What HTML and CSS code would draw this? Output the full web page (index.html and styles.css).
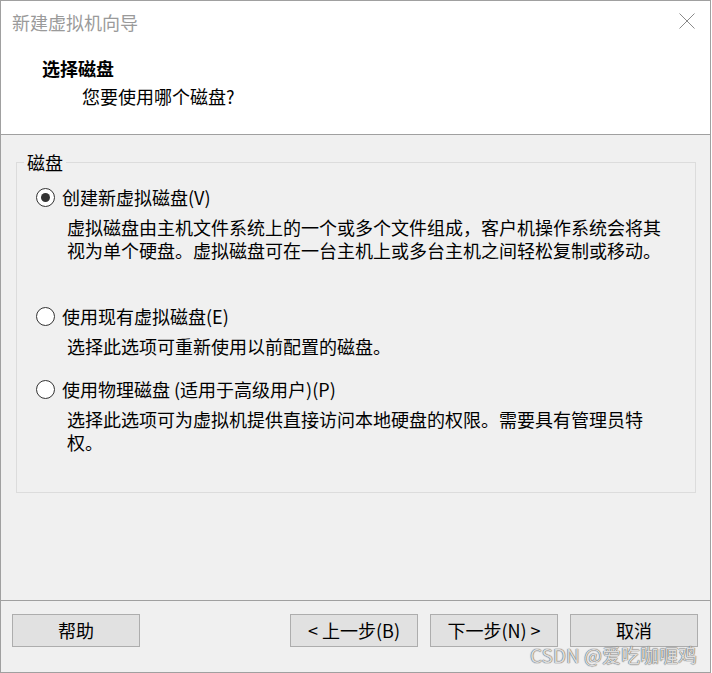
FILE: index.html
```html
<!DOCTYPE html>
<html lang="zh-CN">
  <head>
    <meta charset="UTF-8" />
    <meta name="viewport" content="width=device-width, initial-scale=1.0" />
    <title>新建虚拟机向导</title>
    <link rel="stylesheet" href="styles.css">
  </head>
  <body>
    <div class="window">
      <!-- Верхняя белая часть: заголовок окна и шага -->
      <div class="top">
        <div class="titlebar">
          <span class="title">新建虚拟机向导</span>
          <svg class="close" width="16" height="16" viewBox="0 0 16 16">
            <path d="M0.5 0.5 L15.5 15.5 M15.5 0.5 L0.5 15.5" stroke="#8a8a8a" stroke-width="1" fill="none" />
          </svg>
        </div>
        <div class="step">
          <div class="step-title">选择磁盘</div>
          <div class="step-sub">您要使用哪个磁盘?</div>
        </div>
      </div>

      <!-- Выбор диска -->
      <div class="content">
        <fieldset class="group">
          <legend>磁盘</legend>
          <div class="options">
            <div class="option">
              <label class="row"><span class="radio checked"></span>创建新虚拟磁盘(V)</label>
              <p class="desc tall">虚拟磁盘由主机文件系统上的一个或多个文件组成，客户机操作系统会将其视为单个硬盘。虚拟磁盘可在一台主机上或多台主机之间轻松复制或移动。</p>
            </div>
            <div class="option">
              <label class="row"><span class="radio"></span>使用现有虚拟磁盘(E)</label>
              <p class="desc">选择此选项可重新使用以前配置的磁盘。</p>
            </div>
            <div class="option">
              <label class="row"><span class="radio"></span>使用物理磁盘 (适用于高级用户)(P)</label>
              <p class="desc">选择此选项可为虚拟机提供直接访问本地硬盘的权限。需要具有管理员特权。</p>
            </div>
          </div>
        </fieldset>
      </div>

      <!-- Кнопки -->
      <div class="footer">
        <button class="btn">帮助</button>
        <button class="btn back">&lt; 上一步(B)</button>
        <button class="btn">下一步(N) &gt;</button>
        <button class="btn">取消</button>
      </div>

      <div class="watermark">CSDN @爱吃咖喱鸡</div>
    </div>
  </body>
</html>
```

FILE: styles.css
```css
/* Окно мастера */
body {
  margin: 0;
  background-color: #fff;
  font-family: "Noto Sans CJK SC", "Noto Sans", sans-serif;
  font-size: 18px;
  color: #000;
}

.window {
  position: relative;
  box-sizing: border-box;
  width: 711px;
  height: 673px;
  border: 1px solid #a0a0a0;
  display: flex;
  flex-direction: column;
  background-color: #f0f0f0;
}

.top {
  height: 133px;
  background-color: #fff;
  border-bottom: 1px solid #a0a0a0;
}

.titlebar {
  height: 42px;
  display: flex;
  align-items: center;
  justify-content: space-between;
  padding: 0 15px 0 11px;
}

.title {
  color: #9a9a9a;
  font-size: 18px;
  line-height: 24px;
}

.close {
  display: block;
  margin-top: -2px;
}

.step {
  padding-top: 13px;
}

.step-title {
  padding-left: 41px;
  font-weight: bold;
  line-height: 24px;
}

.step-sub {
  padding-left: 81px;
  margin-top: 4px;
  line-height: 24px;
}

/* Группа "磁盘" */
.content {
  flex: 1;
  padding-top: 15px;
}

.group {
  margin: 0 14px 0 15px;
  padding: 0 0 38px 0;
  border: 1px solid #dcdcdc;
}

.group legend {
  margin-left: 7px;
  padding: 0 3px;
  line-height: 24px;
}

.options {
  display: flex;
  flex-direction: column;
  gap: 19px;
  padding-top: 11px;
}

.row {
  display: flex;
  align-items: center;
  gap: 7px;
  padding-left: 19px;
  line-height: 24px;
}

.radio {
  box-sizing: border-box;
  width: 19px;
  height: 19px;
  border: 1px solid #333;
  border-radius: 50%;
  background-color: #fff;
  display: flex;
  align-items: center;
  justify-content: center;
}

.radio.checked::after {
  content: "";
  width: 9px;
  height: 9px;
  border-radius: 50%;
  background-color: #333;
}

.desc {
  margin: 7px 0 0 0;
  padding: 0 24px 0 50px;
  line-height: 23px;
}

.desc.tall {
  min-height: 69px;
}

/* Нижняя панель */
.footer {
  height: 58px;
  border-top: 1px solid #a0a0a0;
  display: flex;
  gap: 12px;
  padding: 13px 12px 0 11px;
  box-sizing: content-box;
}

.btn {
  width: 128px;
  height: 33px;
  border: 1px solid #adadad;
  background-color: #e1e1e1;
  font-family: inherit;
  font-size: 18px;
  color: #000;
  padding: 0;
  line-height: 31px;
}

.back {
  margin-left: auto;
}

.watermark {
  position: absolute;
  right: 13px;
  bottom: 5px;
  font-size: 19px;
  line-height: 24px;
  color: rgba(245, 245, 245, 0.85);
  text-shadow: 0 0 1px #555, 0 0 1px #555;
}
```
